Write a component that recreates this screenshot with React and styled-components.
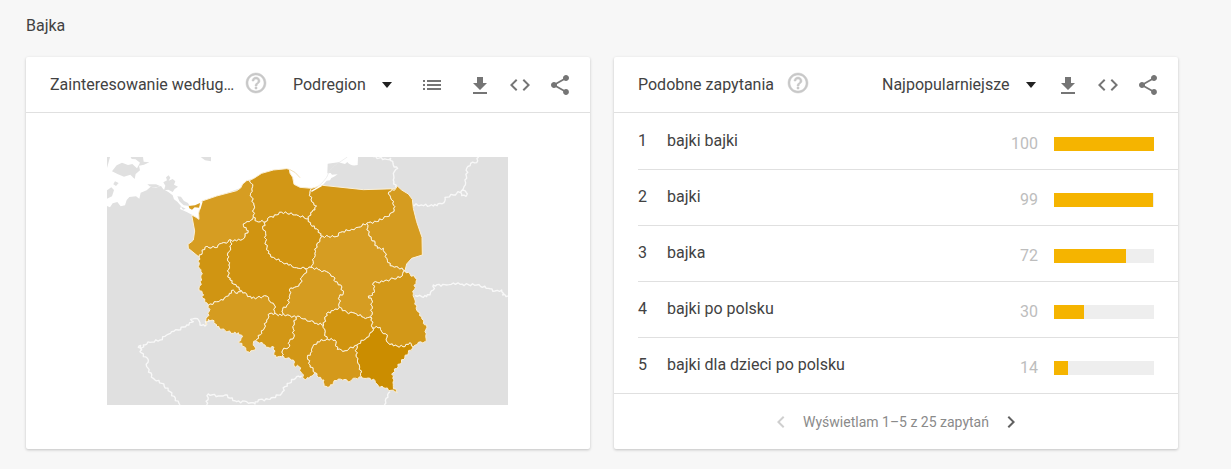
import React, { useState } from "react";
import styled, { createGlobalStyle } from "styled-components";
import {
  MdChevronLeft,
  MdChevronRight,
  MdCode,
  MdHelpOutline,
  MdList,
  MdShare,
} from "react-icons/md";

const queries = [
  { name: "bajki bajki", value: 100 },
  { name: "bajki", value: 99 },
  { name: "bajka", value: 72 },
  { name: "bajki po polsku", value: 30 },
  { name: "bajki dla dzieci po polsku", value: 14 },
];

// borders shared by two regions, each one is stored only once
const borders = {
  zpCoast:
    "298,322 265,295 264,283 275,275 280,270 284,243 275,195 285,200 297,208 296,190 300,170 306,153 350,138 410,122 422,114 428,102 440,92 450,90",
  pomCoast:
    "450,90 460,86 485,70 520,60 560,56 568,58 570,70 578,82 582,103 600,112 635,115",
  wmNorth: "635,115 668,106 790,119 887,116",
  podEast:
    "887,116 892,108 905,120 925,132 937,148 940,175 950,215 966,262 967,315 935,325 920,342 915,362",
  lblEast:
    "915,362 945,383 948,395 940,430 945,450 950,480 965,500 970,520 980,525 975,545 978,565 975,575 955,577 940,590",
  pkSouth:
    "940,590 925,608 875,673 882,690 880,710 892,728 885,725 855,715 835,707 825,692 805,684 785,683",
  malSouth:
    "785,683 760,685 750,695 735,688 715,687 700,698 690,710 672,708 672,690 655,682 645,668",
  slSouth:
    "645,668 640,675 628,685 612,687 605,670 597,650 582,648 580,630 560,625 545,620",
  opSouth: "545,620 528,623 522,608 522,592 505,592 490,583 467,572",
  dsSouth:
    "467,572 460,580 467,595 450,608 440,605 432,590 415,575 428,560 415,548 400,550 375,542 350,530 342,512 325,508 320,523 315,522 322,500 327,485 325,465",
  lbWest:
    "325,465 320,458 308,445 307,430 297,415 305,390 303,365 295,350 298,322",
  zpPom: "450,90 458,110 452,130 462,165 460,202",
  zpWlkp: "460,202 448,215 430,222 432,232 445,242 428,268 410,273 393,270",
  zpLb: "298,322 315,292 345,293 365,280 385,275 393,270",
  pomWlkp: "460,202 470,214 497,215",
  pomKp: "497,215 503,205 530,195 545,187 590,195 625,207",
  pomWm: "635,115 630,130 635,155 650,168 645,180 632,188 625,207",
  kpWm: "625,207 632,225 655,240 662,258 668,259",
  wlkpKp:
    "497,215 488,235 497,250 497,275 505,310 520,322 545,335 565,345 590,353 615,355",
  kpLd: "615,355 633,352",
  kpMaz: "633,352 640,335 645,310 650,285 660,268 668,259",
  wmMaz: "668,259 708,260 722,247 755,238 775,232 800,220",
  wmPod: "800,220 830,215 860,200 882,185 885,170 875,150 865,132 872,125 887,116",
  mazPod:
    "800,220 807,258 825,280 832,295 850,295 860,325 870,347 890,350 915,362",
  mazLbl:
    "915,362 908,370 900,382 870,388 850,395 820,398 822,420 818,435 805,438 815,450 815,505",
  lbWlkp: "393,270 392,300 382,315 387,345 385,375 390,390 410,410 425,422",
  lbDs: "325,465 350,455 370,450 388,430 400,420 412,430 425,422",
  dsWlkp: "425,422 455,445 500,438 510,455 523,465 525,490",
  dsOp: "525,490 510,490 500,510 490,540 467,572",
  wlkpOp: "525,490 535,497 550,492",
  wlkpLd:
    "615,355 620,368 605,382 603,398 590,410 572,414 568,440 565,462 548,478 550,492",
  opLd: "550,492 570,497 588,502",
  opSl: "588,502 578,530 582,560 568,575 568,590 548,600 545,620",
  ldMaz:
    "633,352 660,360 685,368 700,380 705,395 722,405 730,430 718,440 718,472",
  ldSw: "718,472 700,482 680,490 671,525",
  ldSl: "588,502 600,500 620,512 635,512 650,520 671,525",
  slSw: "671,525 675,550 682,567",
  mazSw: "718,472 740,487 765,490 790,502 815,505",
  swLbl: "815,505 817,533",
  swMal: "682,567 705,570 712,598 735,602 770,585",
  swPk: "770,585 800,562 817,545 817,533",
  lblPk: "817,533 840,532 845,545 862,555 860,575 880,588 915,590 930,578 940,590",
  malPk: "770,585 768,620 778,645 785,683",
  slMal: "682,567 652,575 638,590 635,605 622,622 630,645 645,668",
};

const smooth = ["zpCoast", "pomCoast", "wmNorth", "podEast"];

// a minus sign means that the border is walked backwards
const regions = [
  { name: "zachodniopomorskie", fill: "#d69d22", edges: "zpCoast zpPom zpWlkp -zpLb" },
  { name: "pomorskie", fill: "#d29716", edges: "pomCoast pomWm -pomKp -pomWlkp -zpPom" },
  { name: "warmińsko-mazurskie", fill: "#d29716", edges: "wmNorth -wmPod -wmMaz -kpWm -pomWm" },
  { name: "podlaskie", fill: "#d59c20", edges: "podEast -mazPod wmPod" },
  { name: "lubelskie", fill: "#d29818", edges: "lblEast -lblPk -swLbl -mazLbl" },
  { name: "podkarpackie", fill: "#cb8d00", edges: "pkSouth -malPk swPk lblPk" },
  { name: "małopolskie", fill: "#d4991b", edges: "malSouth -slMal swMal malPk" },
  { name: "śląskie", fill: "#d29716", edges: "slSouth -opSl ldSl slSw slMal" },
  { name: "opolskie", fill: "#d29716", edges: "opSouth -dsOp wlkpOp opLd opSl" },
  { name: "dolnośląskie", fill: "#d59c20", edges: "dsSouth lbDs dsWlkp dsOp" },
  { name: "lubuskie", fill: "#d09512", edges: "lbWest zpLb lbWlkp -lbDs" },
  { name: "wielkopolskie", fill: "#d09411", edges: "pomWlkp wlkpKp wlkpLd -wlkpOp -dsWlkp -lbWlkp -zpWlkp" },
  { name: "kujawsko-pomorskie", fill: "#d09411", edges: "pomKp kpWm -kpMaz -kpLd -wlkpKp" },
  { name: "mazowieckie", fill: "#d69d22", edges: "kpMaz wmMaz mazPod mazLbl -mazSw -ldMaz" },
  { name: "łódzkie", fill: "#d59c20", edges: "kpLd ldMaz ldSw -ldSl -opLd -wlkpLd" },
  { name: "świętokrzyskie", fill: "#d0940f", edges: "mazSw swLbl -swPk -swMal -slSw -ldSw" },
];

const neighbours = [
  "820,21 860,28 872,25 880,45 893,55 880,70 880,90 887,112",
  "937,165 965,165 1000,168 1020,160 1032,158 1035,142 1060,135 1090,120 1102,132 1098,139 1085,137 1085,122 1092,110 1100,85 1100,55 1112,40 1130,38 1136,21",
  "945,437 965,440 980,440 1000,420 1000,405 1040,405 1060,399 1080,403 1130,405 1165,415 1185,423 1205,420 1208,435 1224,438",
  "342,512 320,510 315,528 300,525 297,512 285,505 272,508 280,515 260,525 235,540 215,545 200,555 180,570 150,577 130,585 125,600 115,592 122,586 120,605 145,630 140,650 160,685 185,700 210,725 240,765",
  "320,765 325,732 355,738 375,735 410,755 440,755 465,762 475,750 510,748 545,730 555,710 590,680 605,677",
  "870,725 858,745 853,765",
];

function parse(line) {
  return line.split(" ").map((point) => point.split(",").map(Number));
}

// breaks long straight pieces up so the borders look surveyed
function roughen(points) {
  let out = [points[0]];
  for (let i = 1; i < points.length; i++) {
    let [x1, y1] = points[i - 1];
    let [x2, y2] = points[i];
    let length = Math.hypot(x2 - x1, y2 - y1);
    let steps = Math.max(1, Math.round(length / 6));
    for (let s = 1; s < steps; s++) {
      let t = s / steps;
      let shift = Math.sin(x1 * 12.9 + y2 * 7.3 + s * 4.1) * 3.5;
      out.push([
        x1 + (x2 - x1) * t - ((y2 - y1) / length) * shift,
        y1 + (y2 - y1) * t + ((x2 - x1) / length) * shift,
      ]);
    }
    out.push(points[i]);
  }
  return out;
}

const lines = Object.fromEntries(
  Object.entries(borders).map(([key, line]) => [
    key,
    smooth.includes(key) ? parse(line) : roughen(parse(line)),
  ])
);

function toPath(points) {
  return "M" + points.map(([x, y]) => x.toFixed(1) + " " + y.toFixed(1)).join("L");
}

function regionPath(edges) {
  let points = edges.split(" ").flatMap((edge) => {
    return edge[0] === "-" ? [...lines[edge.slice(1)]].reverse() : lines[edge];
  });
  return toPath(points) + "Z";
}

function PolandMap() {
  return (
    <Map viewBox="21 21 1203 744" role="img" aria-label="Polska">
      <path fill="#e0e0e0" d="M21 21H1224V765H21Z" />
      <path
        fill="#fff"
        d="M21 21H774L773 45Q752 50 742 36L735 42L715 37L683 41L682 70L692 69L696 74L713 73L702 80L694 84L690 91L680 92L666 108L640 127L632 117L600 113L583 104L560 56L440 92L420 115L306 155L298 185V208L273 193L260 186L240 177L243 168L232 155L222 148L218 136L205 126L190 118L183 108L165 114L152 110L140 121L122 128L118 146L108 139L88 141L80 150L75 166L62 169L52 156L38 160L30 172L21 168Z"
      />
      <g fill="#e0e0e0">
        <path d="M36 64L50 46L66 38L84 45L97 42L111 55L120 38L107 28L95 27L92 21H129L131 35L148 37L132 44L117 47L120 61L107 72L104 87L91 74L72 80L54 73Z" />
        <path d="M21 21H30L21 54Z" />
        <path d="M21 121L34 112L42 120L36 139L21 146Z" />
        <path d="M40 103L45 94L56 99L48 108Z" />
        <path d="M190 97L201 91L198 82L206 76L211 83L206 92L218 87L226 94L222 104L234 110L224 117L218 126L205 119L192 121L196 107Z" />
        <path d="M142 103H168L182 109L162 113L149 109Z" />
        <path d="M232 139L243 140L252 153L264 159L269 168L251 166L238 154Z" />
        <path d="M242 169L257 176L249 179Z" />
        <path d="M302 21H333V34L315 31Z" />
      </g>
      <path
        d="M742 21L702 48Q686 60 680 82Q660 111 633 120"
        fill="none"
        stroke="#e6e6e6"
        strokeWidth="2"
      />
      <path d="M570 59L586 68L600 83" fill="none" stroke="#eccf92" strokeWidth="2" />
      <path d="M266 168L285 166L300 159L298 173L284 172L276 179L268 175Z" fill="#d69d22" />
      <Borders>
        {neighbours.map((line) => (
          <path key={line} d={toPath(roughen(parse(line)))} />
        ))}
      </Borders>
      {regions.map((region) => (
        <Region key={region.name} fill={region.fill} d={regionPath(region.edges)}>
          <title>{region.name}</title>
        </Region>
      ))}
      <path d="M299 178L306 155" stroke="#fff" strokeWidth="4" />
      <path d="M634 124L664 107" stroke="#fff" strokeWidth="4" />
    </Map>
  );
}

function ExportButtons() {
  return (
    <>
      <IconButton aria-label="Pobierz">
        <svg viewBox="0 0 24 24" fill="currentColor">
          <path d="M19 10h-4V4H9v6H5l7 7 7-7zM5 19v2h14v-2H5z" />
        </svg>
      </IconButton>
      <IconButton aria-label="Umieść">
        <MdCode />
      </IconButton>
      <IconButton aria-label="Udostępnij">
        <MdShare />
      </IconButton>
    </>
  );
}

function Dropdown({ label, options, size }) {
  let [value, setValue] = useState(options[0]);

  return (
    <SelectBox $size={size}>
      <Select
        aria-label={label}
        value={value}
        onChange={(e) => setValue(e.target.value)}
      >
        {options.map((option) => (
          <option key={option}>{option}</option>
        ))}
      </Select>
      <svg viewBox="0 0 24 24" fill="currentColor">
        <path d="M7 9l5 6 5-6z" />
      </svg>
    </SelectBox>
  );
}

export default function App() {
  return (
    <Page>
      <GlobalStyle />
      <PageTitle>Bajka</PageTitle>
      <Cards>
        <Card>
          <CardHeader>
            <CardTitle>Zainteresowanie według…</CardTitle>
            <HelpButton aria-label="Pomoc">
              <MdHelpOutline />
            </HelpButton>
            <Actions>
              <Dropdown label="Region" options={["Podregion", "Miasto"]} size="small" />
              <IconButton aria-label="Lista" $spaced>
                <MdList />
              </IconButton>
              <ExportButtons />
            </Actions>
          </CardHeader>
          <MapArea>
            <PolandMap />
          </MapArea>
        </Card>

        <Card>
          <CardHeader>
            <CardTitle>Podobne zapytania</CardTitle>
            <HelpButton aria-label="Pomoc">
              <MdHelpOutline />
            </HelpButton>
            <Actions>
              <Dropdown
                label="Sortowanie"
                options={["Najpopularniejsze", "Zyskujące popularność"]}
                size="large"
              />
              <ExportButtons />
            </Actions>
          </CardHeader>
          <QueryList>
            {queries.map((query, index) => (
              <QueryRow key={query.name}>
                <Rank>{index + 1}</Rank>
                <QueryLink href="#">{query.name}</QueryLink>
                <Score>
                  {query.value}
                  <Track>
                    <Bar style={{ width: query.value + "%" }} />
                  </Track>
                </Score>
              </QueryRow>
            ))}
          </QueryList>
          <Pager>
            <PagerButton aria-label="Poprzednie" disabled>
              <MdChevronLeft />
            </PagerButton>
            <span>Wyświetlam 1–5 z 25 zapytań</span>
            <PagerButton aria-label="Następne">
              <MdChevronRight />
            </PagerButton>
          </Pager>
        </Card>
      </Cards>
    </Page>
  );
}

const GlobalStyle = createGlobalStyle`
  * {
    box-sizing: border-box;
  }

  body {
    margin: 0;
    background: #f7f7f7;
    color: #424242;
    font-family: Roboto, Arial, sans-serif;
    font-size: 16px;
    line-height: 24px;
  }

  button {
    padding: 0;
    border: 0;
    background: transparent;
    cursor: pointer;
  }
`;

const Page = styled.main`
  padding: 14px 53px 20px 26px;
`;

const PageTitle = styled.h1`
  margin: 0 0 19px;
  font-size: 16px;
  font-weight: 400;
`;

const Cards = styled.div`
  display: grid;
  grid-template-columns: 1fr 1fr;
  gap: 24px;

  @media screen and (max-width: 900px) {
    grid-template-columns: 1fr;
  }
`;

const Card = styled.section`
  min-width: 0;
  background: #fff;
  border-radius: 2px;
  box-shadow: 0 1px 3px rgba(0, 0, 0, 0.22);
`;

const CardHeader = styled.header`
  display: flex;
  align-items: center;
  height: 56px;
  padding: 0 10px 0 24px;
  border-bottom: 1px solid #e0e0e0;
`;

const CardTitle = styled.h2`
  min-width: 138px;
  margin: 0;
  overflow: hidden;
  font-size: 16px;
  font-weight: 400;
  text-overflow: ellipsis;
  white-space: nowrap;
`;

const HelpButton = styled.button`
  flex: none;
  width: 24px;
  height: 24px;
  margin: 0 20px 3px 10px;
  color: #c8c8c8;

  svg {
    display: block;
    width: 24px;
    height: 24px;
  }

  path:last-child {
    stroke: currentColor;
    stroke-width: 0.5px;
  }
`;

const Actions = styled.div`
  display: flex;
  flex: none;
  align-items: center;
  margin-left: auto;
`;

const IconButton = styled.button`
  display: grid;
  place-items: center;
  width: 40px;
  height: 40px;
  margin-right: ${(props) => (props.$spaced ? "8px" : "0")};
  color: #757575;

  svg {
    width: 24px;
    height: 24px;
  }
`;

const SelectBox = styled.div`
  display: grid;
  align-items: center;
  width: ${(props) => (props.$size === "large" ? "166px" : "119px")};
  padding-right: ${(props) => (props.$size === "large" ? "5px" : "13px")};
  color: #212121;

  svg {
    grid-area: 1 / 1;
    justify-self: end;
    width: 24px;
    height: 24px;
    pointer-events: none;
  }
`;

const Select = styled.select`
  grid-area: 1 / 1;
  width: 100%;
  padding: 0;
  border: 0;
  background: transparent;
  color: #424242;
  font: inherit;
  appearance: none;
`;

const MapArea = styled.div`
  padding: 44px 82px 44px 81px;
`;

const Map = styled.svg`
  display: block;
  width: 100%;
`;

const Region = styled.path`
  stroke: #fbf0d8;
  stroke-width: 3px;
  stroke-linejoin: round;
`;

const Borders = styled.g`
  fill: none;
  stroke: #f8f8f8;
  stroke-width: 4px;
  stroke-linejoin: round;
`;

const QueryList = styled.ol`
  margin: 0;
  padding: 0 0 0 24px;
  list-style: none;
`;

const QueryRow = styled.li`
  display: flex;
  align-items: center;
  height: 56px;
  padding-right: 24px;

  & + & {
    padding-bottom: 1px;
    border-top: 1px solid #e0e0e0;
  }
`;

const Rank = styled.span`
  width: 29px;
`;

const QueryLink = styled.a`
  color: inherit;
  text-decoration: none;
`;

const Score = styled.div`
  display: flex;
  align-items: center;
  gap: 16px;
  margin-left: auto;
  padding-top: 6px;
  color: #bdbdbd;
`;

const Track = styled.div`
  width: 100px;
  height: 14px;
  background: #eee;
`;

const Bar = styled.div`
  height: 100%;
  background: #f5b400;
`;

const Pager = styled.footer`
  display: flex;
  align-items: center;
  justify-content: center;
  gap: 10px;
  height: 56px;
  border-top: 1px solid #e0e0e0;
  color: #8a8a8a;
  font-size: 14px;
`;

const PagerButton = styled.button`
  width: 24px;
  height: 24px;
  color: #616161;

  &:disabled {
    color: #cfcfcf;
  }

  svg {
    display: block;
    width: 24px;
    height: 24px;
  }
`;
